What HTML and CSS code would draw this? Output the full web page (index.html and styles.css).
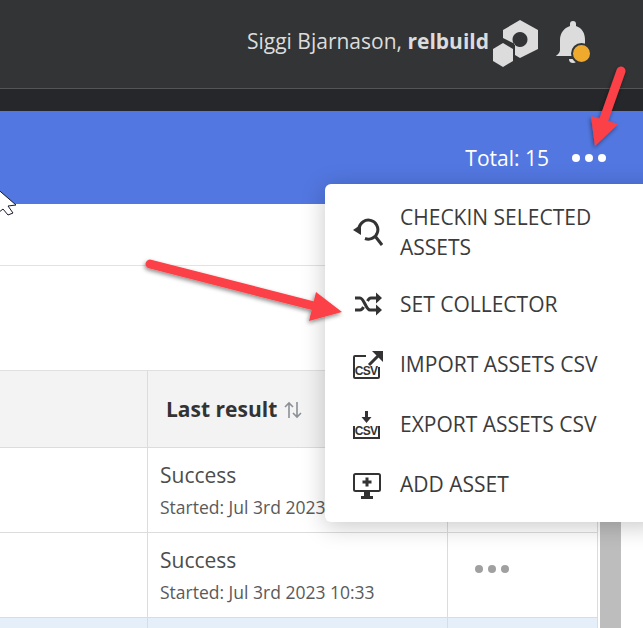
FILE: index.html
```html
<!DOCTYPE html>
<html lang="en">
<head>
<meta charset="utf-8">
<title>Assets</title>
<link rel="stylesheet" href="styles.css">
</head>
<body>
<div class="page">
  <header class="topbar">
    <span class="user">Siggi Bjarnason, <b>relbuild</b></span>
    <svg class="org" viewBox="0 0 48 48" width="48" height="48">
      <path class="lite" fill-rule="evenodd" d="M28 0 46 10V29L28 38 23 35V24L11 18V10ZM28 12a7.500 7.500 0 1 0 .01 0Z"/>
      <path class="lite" d="M11 23 21 29V41L11 47 1 41V29Z"/>
    </svg>
    <svg class="bell" viewBox="0 0 36 44" width="36" height="44">
      <path class="lite" d="M15 3a3 3 0 0 1 6 0V5C27 7 30 12 30 19V29C30 32 32 34 32 35H1C2 34 5 32 5 29V19C5 12 9 7 15 5Z"/>
      <path class="lite" d="M14 38h8a4 4 0 0 1-8 0Z"/>
      <circle class="badge" cx="26.500" cy="32.500" r="9.500"/>
    </svg>
  </header>
  <div class="strip"></div>
  <div class="banner">
    <span class="total">Total: 15</span>
    <span class="dots light"><i></i><i></i><i></i></span>
  </div>
  <div class="filters"><div class="filter-row"></div><div class="filter-row tall"></div></div>
  <div class="table-wrap">
    <div class="table">
      <div class="cell head"></div>
      <div class="cell head result"><b>Last result</b>
        <svg viewBox="0 0 18 18" width="18" height="18"><path d="M5 17V2M1 6 5 2l4 4M13 1v15M9 12l4 4 4-4"/></svg>
      </div>
      <div class="cell head"></div>
      <div class="cell"></div>
      <div class="cell result"><span class="status">Success</span><span class="started">Started: Jul 3rd 2023 10:33</span></div>
      <div class="cell action"></div>
      <div class="cell"></div>
      <div class="cell result"><span class="status">Success</span><span class="started">Started: Jul 3rd 2023 10:33</span></div>
      <div class="cell action"><span class="dots grey"><i></i><i></i><i></i></span></div>
      <div class="cell selected"></div>
      <div class="cell selected"></div>
      <div class="cell selected"></div>
    </div>
    <div class="scrollbar"></div>
  </div>

  <nav class="menu">
    <div class="item two">
      <svg viewBox="0 0 32 32" width="32" height="32"><path class="line" d="M8 12A9.500 9.500 0 1 1 14 22.500M24 20l7 9"/><path class="solid" d="M2 14l8-5.500V19Z"/></svg>
      <span>CHECKIN SELECTED ASSETS</span>
    </div>
    <div class="item">
      <svg viewBox="0 0 32 32" width="32" height="32"><path class="line" d="M4 9H9C13 9 15 21 19 21H27M4 21H9C10.500 21 11.500 20 12.500 18M16.500 12C17.500 10 18.500 9 20 9H27"/><path class="solid" d="M25 3.500l6 5.500-6 5.500ZM25 15.500l6 5.500-6 5.500Z"/></svg>
      <span>SET COLLECTOR</span>
    </div>
    <div class="item">
      <svg viewBox="0 0 32 32" width="32" height="32"><path class="thin" d="M15 7H4a1 1 0 0 0-1 1V28a1 1 0 0 0 1 1H27a1 1 0 0 0 1-1V18"/><path class="line" d="M18 16 27 7"/><path class="solid" d="M21 2H32V13Z"/><text x="15" y="26" class="csv">CSV</text></svg>
      <span>IMPORT ASSETS CSV</span>
    </div>
    <div class="item">
      <svg viewBox="0 0 32 32" width="32" height="32"><path class="thin" d="M3 17V29H28V17"/><path class="line" d="M15.500 2V9"/><path class="solid" d="M10.500 8H20.500L15.500 14Z"/><text x="15" y="26" class="csv">CSV</text></svg>
      <span>EXPORT ASSETS CSV</span>
    </div>
    <div class="item">
      <svg viewBox="0 0 32 32" width="32" height="32"><rect class="thin" x="3" y="5" width="26" height="17" rx="1.500"/><path class="line" d="M16 8.500v9M11.500 13h9M10 28.500H22"/><path class="solid" d="M13 23h6v5h-6Z"/></svg>
      <span>ADD ASSET</span>
    </div>
  </nav>

  <svg class="overlay" viewBox="0 0 643 628" width="643" height="628">
    <defs>
      <filter id="shade" x="-20%" y="-20%" width="140%" height="140%"><feDropShadow dx="-1" dy="2" stdDeviation="2" flood-color="#000" flood-opacity=".45"/></filter>
    </defs>
    <g filter="url(#shade)">
      <path class="arrow-line" d="M150 264 322 308"/>
      <path class="arrow-head" d="M316 292 342 312 309 321Z"/>
      <path class="arrow-line" d="M621 71 603 122"/>
      <path class="arrow-head" d="M591 116 618 124 595 146Z"/>
    </g>
    <path class="cursor" d="M-6 186 16 205 8 206 13 213 8 215 3 209-2 213Z"/>
  </svg>
</div>
</body>
</html>
```
FILE: styles.css
```css
* { box-sizing: border-box; }
html, body { margin: 0; height: 100%; overflow: hidden; background: #fff; }
body { font-family: "Open Sans", "Noto Sans", sans-serif; color: #333; }
.page { position: relative; width: 643px; height: 628px; overflow: hidden; display: flex; flex-direction: column; }

.topbar { height: 89px; flex: none; background: #333436; border-bottom: 1px solid #555; display: flex; align-items: center; justify-content: flex-end; padding: 0 53px 0 0; color: #dcdcdc; font-size: 21px; }
.user { margin-right: 3px; margin-top: -6px; white-space: nowrap; }
.user b { font-weight: 700; }
.org { margin-right: 15px; margin-top: -1px; flex: none; }
.bell { flex: none; margin-top: -2px; margin-right: -1px; }
.lite { fill: #dcdcdc; }
.badge { fill: #efa92c; stroke: #333436; stroke-width: 2; }

.strip { height: 22px; flex: none; background: #26272b; }

.banner { height: 93px; flex: none; background: #5277e0; color: #fff; display: flex; align-items: center; justify-content: flex-end; padding: 0 37px 0 0; }
.total { font-size: 21px; margin-right: 23px; }

.dots { display: inline-flex; gap: 5px; }
.dots i { display: block; width: 8px; height: 8px; border-radius: 50%; }
.dots.light i { background: #fff; }
.dots.grey i { background: #a0a0a0; }

.filters { flex: none; }
.filter-row { height: 62px; border-bottom: 1px solid #e2e2e2; }
.filter-row.tall { height: 105px; border-bottom: 1px solid #e0e0e0; }

.table-wrap { display: flex; flex: 1; min-height: 0; }
.table { width: 598px; flex: none; display: grid; grid-template-columns: 148px 300px 150px; grid-template-rows: 77px 85px 85px 1fr; }
.cell { border-right: 1px solid #dcdcdc; border-bottom: 1px solid #dcdcdc; background: #fff; }
.cell.head { background: #f3f3f3; }
.cell.result { padding: 13px 12px 0; display: flex; flex-direction: column; }
.cell.head.result { flex-direction: row; align-items: center; padding: 0 0 0 18px; gap: 8px; font-size: 21px; color: #333; }
.cell.head.result svg { margin-top: 1px; margin-left: -1px; fill: none; stroke: #8b8f96; stroke-width: 1.600; }
.status { font-size: 21px; line-height: 28px; color: #4d4d4d; }
.started { font-size: 17.500px; line-height: 24px; margin-top: 6px; color: #5a5a5a; white-space: nowrap; }
.cell.action { display: flex; align-items: center; padding-left: 27px; padding-bottom: 12px; }
.cell.selected { background: #e4eff9; border-bottom: 0; }

.scrollbar { width: 21px; margin-left: 2px; background: #bdbdbd; }

.menu { position: absolute; left: 325px; top: 184px; width: 340px; height: 338px; background: #fff; border-radius: 6px; box-shadow: 0 4px 24px rgba(0, 0, 0, .22); padding: 10px 0 0 26px; color: #3b3b3b; font-size: 21px; display: flex; flex-direction: column; }
.item { display: flex; flex: none; align-items: center; height: 60px; gap: 17px; }
.item span { width: 215px; line-height: 30px; padding-bottom: 2px; }
.item.two { height: 76px; margin-bottom: 5px; }
.item.two span { padding-bottom: 0; }
.item svg { flex: none; }
.line { fill: none; stroke: #333; stroke-width: 3; }
.thin { fill: none; stroke: #333; stroke-width: 2; }
.solid { fill: #333; }
.csv { font-family: "Liberation Sans", sans-serif; font-size: 12px; font-weight: 700; letter-spacing: -.8px; text-anchor: middle; fill: #333; }

.overlay { position: absolute; left: 0; top: 0; pointer-events: none; }
.arrow-line { fill: none; stroke: #fc4146; stroke-width: 9; stroke-linecap: round; }
.arrow-head { fill: #fc4146; }
.cursor { fill: #fff; stroke: #1a1a2a; stroke-width: 1; }
```
